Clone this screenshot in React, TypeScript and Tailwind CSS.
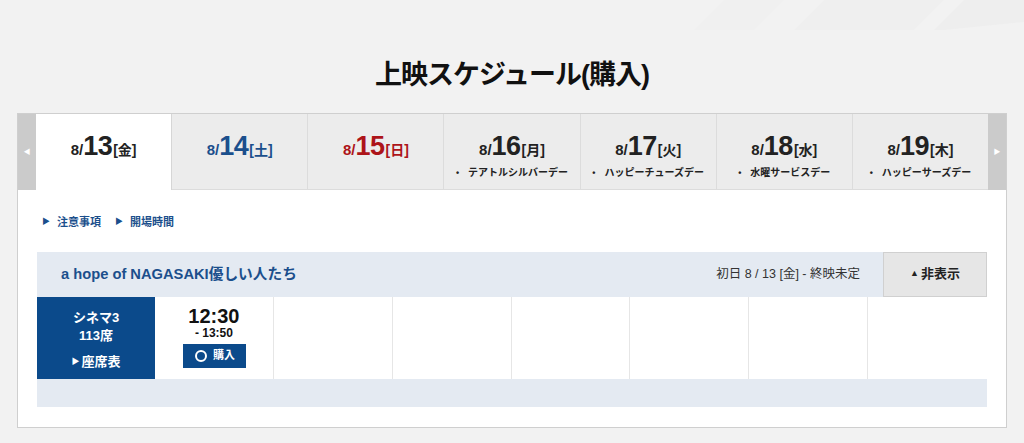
import React from 'react';

type Day = {
  md: string;
  d: string;
  wd: string;
  color: string;
  note?: string;
  active?: boolean;
};

const days: Day[] = [
  { md: '8/', d: '13', wd: '[金]', color: 'text-[#222222]', active: true },
  { md: '8/', d: '14', wd: '[土]', color: 'text-[#1b4f8c]' },
  { md: '8/', d: '15', wd: '[日]', color: 'text-[#ad1419]' },
  { md: '8/', d: '16', wd: '[月]', color: 'text-[#222222]', note: 'テアトルシルバーデー' },
  { md: '8/', d: '17', wd: '[火]', color: 'text-[#222222]', note: 'ハッピーチューズデー' },
  { md: '8/', d: '18', wd: '[水]', color: 'text-[#222222]', note: '水曜サービスデー' },
  { md: '8/', d: '19', wd: '[木]', color: 'text-[#222222]', note: 'ハッピーサーズデー' },
];

const font = { fontFamily: '"Liberation Sans", "Noto Sans CJK JP", sans-serif' };

// one date tab in the strip
const DayTab: React.FC<{ day: Day; last: boolean }> = ({ day, last }) => (
  <div
    className={`flex-1 flex flex-col items-center pt-[18px] ${
      day.active ? 'bg-white' : 'bg-[#ececec] border-b border-[#dcdcdc]'
    } ${last ? '' : 'border-r border-[#d6d6d6]'}`}
  >
    <div className={`flex items-baseline font-bold leading-[28px] ${day.color}`}>
      <span className="text-[15px]">{day.md}</span>
      <span className="text-[27px] tracking-[-0.5px]">{day.d}</span>
      <span className="text-[14px] ml-[1px]">{day.wd}</span>
    </div>
    {day.note && (
      <div className="mt-[3px] text-[10px] font-bold text-[#222] leading-[12px] flex items-center">
        <span className="mr-[9px] text-[9px]">•</span>
        {day.note}
      </div>
    )}
  </div>
);

export default function App() {
  return (
    <div className="relative w-[1024px] h-[443px] overflow-hidden bg-[#f2f2f2]" style={font}>
      {/* faint background shapes */}
      <svg className="absolute top-0 right-0 pointer-events-none" width="560" height="30" viewBox="0 0 560 30">
        <polygon points="260,0 320,0 290,30 230,30" fill="#f0f0f0" />
        <polygon points="360,0 480,0 450,30 330,30" fill="#efefef" />
        <polygon points="500,0 560,0 560,22 480,30 470,30" fill="#eeeeee" />
      </svg>

      <h1 className="relative pt-[58px] h-[92px] text-center text-[27px] leading-[34px] font-bold text-[#111] tracking-[-1px]">
        上映スケジュール(購入)
      </h1>

      <div className="relative mt-[21px] mx-[17px] bg-white border border-[#cfcfcf]">
        {/* date strip */}
        <div className="flex h-[76px]">
          <div className="w-[18px] bg-[#cbcbcb] flex items-center justify-center">
            <span className="text-white text-[7px]">◀</span>
          </div>
          <div className="flex flex-1">
            {days.map((day, i) => (
              <DayTab key={day.d} day={day} last={i === days.length - 1} />
            ))}
          </div>
          <div className="w-[18px] bg-[#cbcbcb] flex items-center justify-center">
            <span className="text-white text-[7px]">▶</span>
          </div>
        </div>

        <div className="px-[19px] pt-[24px] pb-[20px]">
          {/* links */}
          <div className="flex items-center gap-[14px] pl-[5px] text-[11px] font-bold text-[#1b4f8c]">
            <span className="flex items-center">
              <span className="text-[8px] mr-[7px]">▶</span>注意事項
            </span>
            <span className="flex items-center">
              <span className="text-[8px] mr-[7px]">▶</span>開場時間
            </span>
          </div>

          {/* film block */}
          <div className="mt-[21px]">
            <div className="flex items-center h-[45px] bg-[#e4eaf2]">
              <div className="flex-1 pl-[24px] text-[14.7px] font-bold text-[#1b4f8c]">
                a hope of NAGASAKI優しい人たち
              </div>
              <div className="text-[12.5px] text-[#333] mr-[23px]">初日 8 / 13 [金] - 終映未定</div>
              <div className="w-[104px] h-full bg-[#e6e6e6] border border-[#d0d0d0] flex items-center justify-center text-[13px] font-bold text-[#222]">
                <span className="text-[9px] mr-[2px]">▲</span>非表示
              </div>
            </div>

            <div className="flex h-[82px]">
              <div className="w-[118px] bg-[#0b4a8b] text-white font-bold text-[13px] flex flex-col items-center pt-[12px]">
                <div className="leading-[18px]">シネマ3</div>
                <div className="leading-[18px]">113席</div>
                <div className="mt-[8px] leading-[18px] flex items-center">
                  <span className="text-[8px] mr-[2px]">▶</span>座席表
                </div>
              </div>
              <div className="flex-1 grid grid-cols-7">
                <div className="border-r border-[#e6e6e6] flex flex-col items-center pt-[9px]">
                  <div className="text-[20px] font-bold text-[#111] leading-[20px]">12:30</div>
                  <div className="text-[12px] font-bold text-[#111] leading-[14px]">- 13:50</div>
                  <div className="mt-[4px] ml-[2px] w-[63px] h-[24px] bg-[#0b4a8b] flex items-center justify-center gap-[6px]">
                    <span className="w-[12px] h-[12px] rounded-full border-2 border-white" />
                    <span className="text-white text-[11px] font-bold">購入</span>
                  </div>
                </div>
                <div className="border-r border-[#e6e6e6]" />
                <div className="border-r border-[#e6e6e6]" />
                <div className="border-r border-[#e6e6e6]" />
                <div className="border-r border-[#e6e6e6]" />
                <div className="border-r border-[#e6e6e6]" />
                <div />
              </div>
            </div>

            <div className="h-[28px] bg-[#e4eaf2]" />
          </div>
        </div>
      </div>
    </div>
  );
}
